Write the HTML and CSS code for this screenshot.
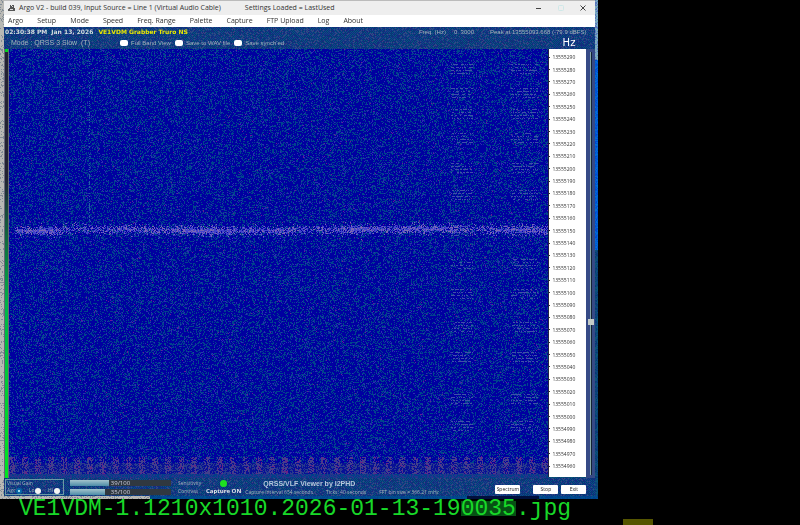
FILE: index.html
```html
<!DOCTYPE html>
<html lang="en">
<head>
<meta charset="utf-8">
<title>Argo V2 grabber</title>
<link rel="stylesheet" href="styles.css">
</head>
<body>
<main class="capture">
  <canvas class="grain" data-palette="edge"></canvas>
  <section class="window">
    <header class="titlebar">
      <svg class="app-icon" viewBox="0 0 8 8" aria-hidden="true"><path d="M2 1h1v1h1V1h2v3h1v3H0V5h1V4h1z" fill="#555"/><path d="M2 5h3v1H2zM4 2h1v1H4z" fill="#ddd"/></svg>
      <h1>Argo V2 - build 039, Input Source = Line 1 (Virtual Audio Cable)</h1>
      <span class="settings">Settings Loaded = LastUsed</span>
      <div class="window-controls">
        <button type="button" aria-label="Minimize"><svg viewBox="0 0 6 6"><path d="M0 3.5h5" stroke="#444"/></svg></button>
        <button type="button" aria-label="Maximize"><svg viewBox="0 0 6 6"><rect x=".5" y=".5" width="5" height="5" rx="1" fill="none" stroke="#cfe8e8"/></svg></button>
        <button type="button" aria-label="Close"><svg viewBox="0 0 6 6"><path d="M.5.5l5 5m0-5l-5 5" stroke="#444" fill="none"/></svg></button>
      </div>
    </header>
    <nav class="menubar">
      <a href="#">Argo</a><a href="#">Setup</a><a href="#">Mode</a><a href="#">Speed</a><a href="#">Freq. Range</a><a href="#">Palette</a><a href="#">Capture</a><a href="#">FTP Upload</a><a href="#">Log</a><a href="#">About</a>
    </nav>
    <section class="status">
      <canvas class="grain" data-palette="panel"></canvas>
      <div class="status-row">
        <time class="clock">02:30:38 PM</time>
        <time class="date">Jan 13, 2026</time>
        <strong class="station">VE1VDM Grabber Truro NS</strong>
        <span class="freq">Freq. (Hz)</span><span class="freq-value">0. 3000</span>
        <span class="peak">Peak at 13555093.668 (-79.9 dBFS)</span>
      </div>
      <div class="status-row options">
        <span class="mode">Mode : QRSS 3 Slow &nbsp;(T)</span>
        <label><input type="checkbox">Full Band View</label>
        <label><input type="checkbox">Save to WAV file</label>
        <label><input type="checkbox">Save synch'ed</label>
        <span class="unit">Hz</span>
      </div>
    </section>
    <section class="viewer">
      <div class="level"></div>
      <div class="waterfall"><canvas class="grain" data-palette="signal"></canvas></div>
      <ol class="scale" id="scale"></ol>
      <div class="gain"><input type="range" min="0" max="100" value="36" aria-label="Brightness"></div>
    </section>
    <footer class="panel">
      <canvas class="grain" data-palette="panel"></canvas>
      <fieldset class="visual-gain">
        <legend>Visual Gain</legend>
        <div class="choices">
          <label>Agc<input type="radio" name="gain" checked></label>
          <label>Lo<input type="radio" name="gain"></label>
          <label>Hi<input type="radio" name="gain"></label>
        </div>
      </fieldset>
      <div class="meters">
        <div class="meter"><i style="width:39%"></i><span>39/100</span></div>
        <div class="meter"><i style="width:35%"></i><span>35/100</span></div>
      </div>
      <div class="meter-names"><span>Sensitivity</span><span>Contrast</span></div>
      <div class="capture-state"><i class="led"></i><strong>Capture ON</strong></div>
      <div class="about">
        <strong>QRSS/VLF Viewer by I2PHD</strong>
        <div class="about-row"><span>Capture interval 654 seconds</span><span>Ticks: 40 seconds</span><span>FFT bin size = 366.21 mHz</span></div>
      </div>
      <div class="actions">
        <button type="button">Spectrum</button>
        <button type="button" class="stop">Stop</button>
        <button type="button">Exit</button>
      </div>
    </footer>
  </section>
</main>
<p class="caption">VE1VDM-1.1210x1010.2026-01-13-19<span class="smear">0035</span>.jpg</p>
<div class="tray"><span></span></div>
<script src="app.js"></script>
</body>
</html>
```
FILE: styles.css
```css
* { box-sizing: border-box; }

body {
  margin: 0;
  background: #000;
  font-family: "Open Sans", "Noto Sans", sans-serif;
  font-size: 7px;
  line-height: 8px;
}

h1, p, ol { margin: 0; padding: 0; }
a { color: inherit; text-decoration: none; }

.grain {
  position: absolute;
  inset: 0;
  width: 100%;
  height: 100%;
  z-index: -1;
}

.capture {
  position: relative;
  z-index: 0;
  width: 74.8%;
  padding: 0 3px 3px 4px;
}

.titlebar {
  display: flex;
  align-items: center;
  height: 15px;
  padding: 0 9px 0 4px;
  background: #eee;
  border-top: 1px solid #bbb;
  color: #333;
  white-space: nowrap;
}

.titlebar h1 { font-size: 7px; font-weight: 400; }
.app-icon { width: 8px; height: 8px; margin-right: 3px; }
.settings { margin-left: 24px; }
.window-controls { display: flex; gap: 16px; margin-left: auto; }
.window-controls button {
  width: 6px;
  height: 6px;
  padding: 0;
  border: 0;
  background: none;
}
.window-controls svg { display: block; }

.menubar {
  display: flex;
  align-items: center;
  gap: 14px;
  height: 12px;
  padding-left: 4px;
  background: #fff;
  color: #333;
  white-space: nowrap;
}

.status {
  position: relative;
  z-index: 0;
  height: 22px;
  color: #a4b4bc;
  font-family: "Liberation Sans", sans-serif;
  font-size: 6px;
  white-space: nowrap;
}

.status-row {
  display: flex;
  align-items: center;
  height: 10px;
  padding: 0 9px 0 1px;
}

.clock, .date, .station { font: bold 6px/8px "DejaVu Sans", sans-serif; color: #d5dede; }
.date { margin-left: 4px; }
.status .station { margin-left: 5px; color: #e8e800; }
.freq { margin-left: auto; }
.freq-value { margin: 0 16px 0 8px; }

.options { height: 12px; padding: 0 20px 0 7px; }
.mode { width: 109px; font-size: 7px; }
.options label { display: flex; align-items: center; gap: 3px; margin-right: 4px; }
.options input {
  appearance: none;
  width: 8px;
  height: 6px;
  margin: 0;
  border-radius: 2px;
  background: #fff;
}
.unit { margin-left: auto; color: #fff; font-size: 10px; font-family: "DejaVu Sans", sans-serif; }

.viewer { display: flex; }

.level {
  width: 5px;
  background: linear-gradient(#00d520 3px, #223 3px, #223 30%, #00b548 60%, #00e520);
  border: solid #667;
  border-width: 0 1px;
}

.waterfall {
  position: relative;
  z-index: 0;
  flex: 1;
  min-width: 0;
  aspect-ratio: 539 / 429;
}

.scale {
  display: flex;
  flex-direction: column;
  width: 38px;
  margin-bottom: 1px;
  padding: 2px 0 5px;
  list-style: none;
  background: #fff;
  border-left: 1px solid #224;
  color: #333;
  font: 5px/6px "Open Sans", sans-serif;
}
.scale li { flex: 1; display: flex; align-items: center; gap: 2px; }
.scale li::before { content: ""; width: 1px; height: 1px; background: #333; }

.gain {
  contain: size;
  width: 9px;
  display: flex;
  justify-content: center;
  padding: 3px 0;
  background: #364a86;
}
.gain input {
  appearance: none;
  writing-mode: vertical-lr;
  direction: rtl;
  width: 6px;
  margin: 0;
  background: linear-gradient(90deg, transparent 2px, #8aa 2px, #8aa 3px, #123 3px, #123 4px, transparent 4px);
}
.gain input::-webkit-slider-thumb {
  appearance: none;
  width: 6px;
  height: 6px;
  background: #c4ccc8;
}

.panel {
  position: relative;
  z-index: 0;
  display: flex;
  align-items: center;
  height: 18px;
  padding: 0 9px 0 1px;
  color: #a4b4bc;
  font-size: 5px;
  line-height: 8px;
  white-space: nowrap;
}

.visual-gain {
  width: 59px;
  height: 16px;
  margin: 0;
  padding: 0 1px;
  border: 1px solid #6a9aa5;
}
.visual-gain legend { float: left; width: 100%; padding: 0; line-height: 7px; }
.choices { display: flex; justify-content: space-between; clear: both; padding-right: 2px; }
.choices label { display: flex; align-items: center; gap: 1px; line-height: 7px; }
.choices input {
  appearance: none;
  width: 6px;
  height: 6px;
  margin: 0;
  border-radius: 50%;
  background: #f4f4f4;
}
.choices input:checked { background: #cff; border: 2px solid #0868a8; }

.meters { width: 101px; margin-left: 6px; display: grid; gap: 3px; }
.meter { position: relative; height: 6px; background: #303840; }
.meter i { display: block; height: 100%; background: linear-gradient(#a4c4cc, #4c8ca8); }
.meter span { position: absolute; inset: 0; text-align: center; font-size: 6px; line-height: 6px; color: #ccd; }

.meter-names { display: grid; width: 28px; margin-left: 7px; }
.capture-state { display: grid; justify-items: center; color: #e4e8ec; font-size: 6px; }
.led { width: 7px; height: 7px; border-radius: 50%; background: #1ee020; }
.about { margin-left: 4px; }
.about strong { display: block; margin-left: 18px; color: #b4c8dc; font: bold 7px/9px "Liberation Sans", sans-serif; }
.about-row { display: flex; gap: 13px; }

.actions { display: flex; gap: 3px; margin: 4px 0 0 auto; }
.actions button {
  width: 25px;
  height: 9px;
  padding: 0;
  border: 0;
  border-radius: 1px;
  background: #fff;
  color: #222;
  font: 5px/8px "Open Sans", sans-serif;
}
.actions .stop { margin-left: 10px; }

.caption {
  height: 20px;
  padding-left: 19px;
  color: #18d828;
  font: 23px/20px "Liberation Mono", monospace;
  white-space: nowrap;
}
.smear { background: linear-gradient(transparent 5px, #075014 5px, #075014 20px, transparent 20px); }

.tray { height: 6px; padding-left: 77.9%; }
.tray span { display: block; width: 30px; height: 6px; background: #550; }
```
FILE: app.js
```js
const scale = document.getElementById("scale");
for (let f = 13555290; f >= 13554960; f -= 10) {
  const li = document.createElement("li");
  li.textContent = f;
  scale.append(li);
}

let seed = 20260113;
function rnd() {
  seed = (seed * 1664525 + 1013904223) >>> 0;
  return seed / 4294967296;
}

const bursts = [45, 98, 149, 204, 274, 338, 420, 502, 572, 648, 720, 815, 880];

// Colour of one spectrogram pixel; u and v run from 0 to 1 across the plot.
function signal(x, y, w, h) {
  const u = x / w, v = y / h, r = rnd();
  const mid = h * 0.421 + (u < 0.1 ? 2 : 0) - Math.sin(u * 9 + 1);
  const d = Math.abs(y - mid);
  const power = 0.75 + 0.25 * Math.sin(u * 31) * Math.sin(u * 13);
  if (u > 0.01 && d < 10 && rnd() < power * Math.exp(-d * d / 14)) {
    return r < 0.35 ? [124, 104, 180] : [68, 68, 204];
  }
  if (v > 0.99) return r < 0.5 ? [0, 64, 136] : [40, 50, 140];
  if (v > 0.95 && x % 13 < 6 && r < 0.6) return r < 0.1 ? [104, 32, 136] : [68, 64, 140];
  if (v > 0.965) return r < 0.4 ? [40, 60, 140] : [8, 16, 150];
  const stripe = bursts.some(b => Math.abs(v * 1000 - b) < 14);
  if (y % 3 === 0 && stripe && ((u > 0.82 && u < 0.86) || (u > 0.93 && u < 0.98)) && r < 0.55) return [64, 80, 168];
  if (Math.abs(x - 80) < 1 && v < 0.4 && r < 0.4) return [40, 90, 170];
  if (r < 0.25) return [0, 68, 140];
  if (r < 0.31) return [44, 44, 176];
  if (r < 0.315) return [104, 24, 150];
  return [0, 0, 160];
}

function panel(x, y) {
  const r = rnd();
  if ((x + y) % 2 && r < 0.75) return [16, 72, 136];
  return r < 0.2 ? [64, 68, 128] : r < 0.6 ? [0, 64, 112] : [20, 44, 128];
}

// Desktop strip that shows to the left, right and below the window.
function edge(x, y, w, h) {
  const r = rnd();
  if (x < 8 || (y > h - 4 && x < w * 0.25)) return r < 0.8 ? [184, 184, 180] : [130, 140, 150];
  if (y > h - 4) return x > w * 0.78 && x < w * 0.9 ? [0, 16, 60] : [0, 60 + r * 24, 140];
  if (y < h * 0.12) return r < 0.6 ? [120, 170, 190] : [90, 120, 190];
  return y < h * 0.5 ? [0, 68 + r * 50, 210] : [10, 50 + r * 40, 120];
}

const painters = { signal, panel, edge };

function paint() {
  for (const canvas of document.querySelectorAll(".grain")) {
    const w = canvas.width = canvas.clientWidth;
    const h = canvas.height = canvas.clientHeight;
    const ctx = canvas.getContext("2d");
    const img = ctx.createImageData(w, h);
    const pick = painters[canvas.dataset.palette];
    for (let y = 0, i = 0; y < h; y++) {
      for (let x = 0; x < w; x++, i += 4) {
        const c = pick(x, y, w, h);
        img.data[i] = c[0];
        img.data[i + 1] = c[1];
        img.data[i + 2] = c[2];
        img.data[i + 3] = 255;
      }
    }
    ctx.putImageData(img, 0, 0);
  }
}

paint();
addEventListener("resize", paint);
```
